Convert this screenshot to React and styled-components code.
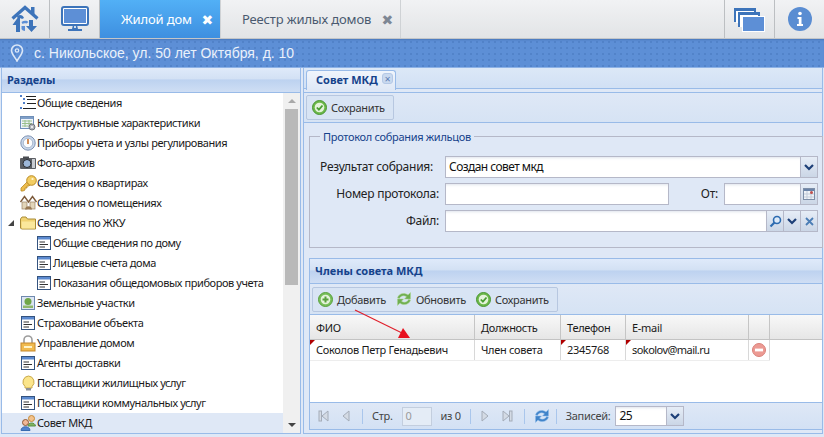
import React from 'react';
import styled, { createGlobalStyle } from 'styled-components';

const GlobalStyle = createGlobalStyle`
  html, body { margin: 0; padding: 0; background: #dfe8f6; }
  * { box-sizing: border-box; }
`;

const FONT = `"Noto Sans", "DejaVu Sans", sans-serif`;

const HomeLogo = () => (
  <svg width='28' height='28' viewBox='0 0 28 28'>
    <path d='M1.500 13.500 L14 2.500 L26.500 13.500' fill='none' stroke='#3d74ba' strokeWidth='3.200' />
    <rect x='20' y='2' width='3.500' height='8' fill='#3d74ba' />
    <path d='M6 11 C9 9 12 10 13 13 L11 14 C10 13 9.500 13 9 13.500 V27 H5 V20 H1.500 L6.500 13 Z' fill='#3d74ba' />
    <path d='M22 15 V21 H26 L20.500 27 L15 21 H18 V15 Z' fill='#3d74ba' />
    <path d='M10.500 17 C13 15 16 15.500 17.500 17 L15.500 18.500 C14 18 12.500 18 11.500 19 Z' fill='#5d8fd6' />
    <path d='M10.500 21 H14 V26 C12.500 26 11 25 10.500 24 Z' fill='#5d8fd6' />
  </svg>
);

const MonitorIcon = () => (
  <svg width='28' height='26' viewBox='0 0 28 26'>
    <rect x='1' y='1' width='26' height='18' rx='2' fill='#fff' stroke='#3d74ba' strokeWidth='2' />
    <rect x='3' y='3' width='22' height='14' fill='#5d8fd6' />
    <path d='M12 19 H16 L17 23 H21 V25 H7 V23 H11 Z' fill='#3d74ba' />
    <circle cx='14' cy='21' r='1' fill='#fff' />
  </svg>
);

const PinIcon = () => (
  <svg width='14' height='18' viewBox='0 0 14 18'>
    <path d='M7 17 C4 12 1.500 9.500 1.500 6.500 A5.500 5.500 0 0 1 12.500 6.500 C12.500 9.500 10 12 7 17 Z' fill='none' stroke='#dbe7f7' strokeWidth='1.600' />
    <circle cx='7' cy='6.500' r='1.700' fill='none' stroke='#dbe7f7' strokeWidth='1.300' />
  </svg>
);

const WindowsIcon = () => (
  <svg width='31' height='25' viewBox='0 0 31 25'>
    <rect x='0' y='1' width='22' height='14' fill='#3d74ba' />
    <rect x='2' y='4' width='18' height='12' fill='#fff' />
    <rect x='4' y='5' width='22' height='15' fill='#3d74ba' />
    <rect x='6' y='8' width='18' height='12' fill='#fff' />
    <rect x='8' y='9' width='23' height='16' fill='#fff' />
    <rect x='9' y='10' width='21' height='14' fill='#5d8fd6' />
  </svg>
);

const InfoIcon = () => (
  <svg width='24' height='24' viewBox='0 0 24 24'>
    <circle cx='12' cy='12' r='12' fill='#5a8dd2' />
    <circle cx='12' cy='6.500' r='1.800' fill='#fff' />
    <path d='M9.500 10 H13.500 V17 H15 V19 H9 V17 H10.800 V12 H9.500 Z' fill='#fff' />
  </svg>
);

const CheckIcon = () => (
  <svg width='15' height='15' viewBox='0 0 15 15'>
    <circle cx='7.500' cy='7.500' r='7' fill='#6cb84a' stroke='#4a9632' />
    <circle cx='7.500' cy='7.500' r='4.800' fill='#e4f3da' />
    <path d='M4.800 7.500 L6.900 9.700 L10.500 5.500' fill='none' stroke='#4a9e34' strokeWidth='1.800' />
  </svg>
);

const AddIcon = () => (
  <svg width='15' height='15' viewBox='0 0 15 15'>
    <circle cx='7.500' cy='7.500' r='7' fill='#78bf5a' stroke='#58a03c' />
    <circle cx='7.500' cy='7.500' r='4.800' fill='#e4f3da' />
    <path d='M7.500 4.500 V10.500 M4.500 7.500 H10.500' stroke='#58a03c' strokeWidth='2' />
  </svg>
);

const RefreshIcon = ({ color = '#6fae50', light = '#a8d48c' }) => (
  <svg width='16' height='16' viewBox='0 0 16 16'>
    <path d='M1.500 7 C2.500 2.500 8.500 1 12 4 L14.500 1.500 V8 H8.500 L10.500 5.800 C8 3.800 4.500 4.800 3.500 7.500 Z' fill={color} stroke={light} strokeWidth='0.500' />
    <path d='M14.500 9 C13.500 13.500 7.500 15 4 12 L1.500 14.500 V8 H7.500 L5.500 10.200 C8 12.200 11.500 11.200 12.500 8.500 Z' fill={color} stroke={light} strokeWidth='0.500' />
  </svg>
);

const RemoveIcon = () => (
  <svg width='14' height='14' viewBox='0 0 14 14'>
    <circle cx='7' cy='7' r='6.500' fill='#ec9a93' stroke='#d9807a' />
    <rect x='3' y='5.600' width='8' height='2.800' fill='#fff' />
  </svg>
);

const ChevronIcon = ({ color = '#1d3f77' }) => (
  <svg width='10' height='7' viewBox='0 0 10 7'>
    <path d='M1 1 L5 5 L9 1' fill='none' stroke={color} strokeWidth='2.200' />
  </svg>
);

const CalendarIcon = () => (
  <svg width='12' height='12' viewBox='0 0 12 12'>
    <rect x='0.500' y='0.500' width='11' height='11' fill='#f0f3f8' stroke='#7d8ea8' />
    <rect x='1' y='1' width='10' height='2' fill='#6a83a8' />
    <path d='M4 3 V11 M8 3 V11 M1 6 H11 M1 9 H11' stroke='#c2cbd9' />
    <circle cx='8.500' cy='4.500' r='1.500' fill='#c0504d' />
  </svg>
);

const SearchIcon = () => (
  <svg width='13' height='13' viewBox='0 0 13 13'>
    <circle cx='8' cy='5' r='3.500' fill='#dce9f8' stroke='#2c6bb0' strokeWidth='1.600' />
    <path d='M5.500 7.500 L1.500 11.500' stroke='#2c6bb0' strokeWidth='2.200' />
  </svg>
);

const CrossIcon = () => (
  <svg width='9' height='9' viewBox='0 0 9 9'>
    <path d='M1 1 L8 8 M8 1 L1 8' stroke='#4b7db5' strokeWidth='1.800' />
  </svg>
);

const PagerGlyph = ({ dir, bar }) => (
  <svg width='12' height='12' viewBox='0 0 12 12' style={{ transform: dir === 'left' ? 'scaleX(-1)' : 'none' }}>
    <path d='M2 1 L8 6 L2 11 Z' fill='#d4dbe5' stroke='#a4acb8' />
    {bar && <rect x='8.500' y='1' width='2.500' height='10' fill='#d4dbe5' stroke='#a4acb8' />}
  </svg>
);

const ListIcon = () => (
  <svg width='16' height='16' viewBox='0 0 16 16'>
    <g fill='#4f7fcb'>
      <rect x='0' y='0' width='2' height='2' /><rect x='3' y='3' width='2' height='2' />
      <rect x='3' y='7' width='2' height='2' /><rect x='0' y='12' width='2' height='2' />
    </g>
    <path d='M6 1.500 H16 M7 4.500 H16 M7 8.500 H16 M3 13.500 H16' stroke='#222' />
  </svg>
);

const TableGearIcon = () => (
  <svg width='16' height='16' viewBox='0 0 16 16'>
    <rect x='0.500' y='1.500' width='13' height='12' fill='#eef3fa' stroke='#6f8fb8' />
    <rect x='1' y='2' width='12' height='2' fill='#7f9fc8' />
    <path d='M2 6 H12 M2 8.500 H12 M2 11 H9 M5 5 V12 M9 5 V10' stroke='#9ac08a' />
    <circle cx='12' cy='12' r='3' fill='#b0b4ba' stroke='#70757c' />
    <circle cx='12' cy='12' r='1' fill='#fff' />
  </svg>
);

const GaugeIcon = () => (
  <svg width='16' height='16' viewBox='0 0 16 16'>
    <circle cx='8' cy='8' r='7.200' fill='#c9d8ec' stroke='#7f93b3' />
    <circle cx='8' cy='8' r='4.800' fill='#fbfcfe' stroke='#a6b6cc' />
    <path d='M8 4 V9' stroke='#c9702a' strokeWidth='1.600' />
  </svg>
);

const CameraIcon = () => (
  <svg width='16' height='14' viewBox='0 0 16 14'>
    <rect x='0' y='2' width='16' height='11' rx='1' fill='#5c5f64' />
    <rect x='3' y='0.500' width='6' height='3' fill='#4a4d52' />
    <rect x='12' y='3' width='3' height='9' fill='#c8ccd2' />
    <circle cx='7' cy='7.500' r='4' fill='#9db7d8' stroke='#2a2c30' />
  </svg>
);

const KeyIcon = () => (
  <svg width='17' height='17' viewBox='0 0 17 17'>
    <path d='M1 13 L8 6 L11 9 L9 11 L7 11 L7 13 L5 13 L5 15 L3 16 L1 16 Z' fill='#edbd4e' stroke='#b98a24' strokeWidth='0.800' />
    <circle cx='11.500' cy='5.500' r='4.800' fill='#f3cd62' stroke='#b98a24' />
    <circle cx='12.500' cy='4' r='1.100' fill='#fff6d8' />
  </svg>
);

const HousesIcon = () => (
  <svg width='17' height='16' viewBox='0 0 17 16'>
    <path d='M0.500 7 L4.500 1.500 L8.500 7 L12.500 1.500 L16.500 7' fill='none' stroke='#7c5a3a' strokeWidth='1.400' />
    <rect x='2' y='7' width='5' height='7' fill='#e2d5b9' stroke='#9a8468' strokeWidth='0.700' />
    <rect x='10' y='7' width='5' height='7' fill='#e2d5b9' stroke='#9a8468' strokeWidth='0.700' />
    <path d='M5 14.500 C5 10 12 10 12 14.500 Z' fill='#9a7a55' />
  </svg>
);

const FolderIcon = () => (
  <svg width='16' height='14' viewBox='0 0 16 14'>
    <path d='M0.500 3 L2 1 H6 L7.500 3 H15.500 V13 H1.500 L0.500 12 Z' fill='#f1d372' stroke='#a98c38' />
    <path d='M1.500 5.500 H15 V12.500 H2 Z' fill='#fbe89c' />
  </svg>
);

const FormIcon = () => (
  <svg width='14' height='14' viewBox='0 0 14 14'>
    <rect x='0.500' y='0.500' width='13' height='13' fill='#fff' stroke='#34537f' />
    <rect x='1' y='1' width='12' height='2.500' fill='#5c8ad0' />
    <path d='M2.500 6 H8 M2.500 8.500 H11 M2.500 11 H8' stroke='#333' />
  </svg>
);

const LandIcon = () => (
  <svg width='14' height='14' viewBox='0 0 14 14'>
    <rect x='0.500' y='0.500' width='13' height='13' fill='#dce5f2' stroke='#6f89ae' />
    <circle cx='7' cy='5.500' r='3.500' fill='#6fa648' />
    <rect x='2' y='9.500' width='10' height='2.500' fill='#8fb86c' />
  </svg>
);

const LockIcon = () => (
  <svg width='16' height='17' viewBox='0 0 16 17'>
    <path d='M4 8 V5 A4 4 0 0 1 12 5 V8' fill='none' stroke='#9d9d9d' strokeWidth='1.600' />
    <rect x='1' y='8' width='14' height='8' fill='#f1bb4f' stroke='#c6872a' />
    <path d='M4 12 H12' stroke='#fff4c8' strokeWidth='2' />
  </svg>
);

const BulbIcon = () => (
  <svg width='15' height='16' viewBox='0 0 15 16'>
    <path d='M7.500 1 A6 6 0 0 1 11 11.500 V13 H4 V11.500 A6 6 0 0 1 7.500 1 Z' fill='#fbe58b' stroke='#c9a94b' />
    <rect x='5' y='13' width='5' height='2.500' fill='#8f9297' />
  </svg>
);

const UsersIcon = () => (
  <svg width='17' height='16' viewBox='0 0 17 16'>
    <circle cx='11.500' cy='3.500' r='3' fill='#f2c28c' stroke='#c58a3a' />
    <path d='M8 11 C8 7 15 7 15.500 11 Z' fill='#7db45e' stroke='#5b8f45' />
    <circle cx='5.500' cy='7.500' r='3' fill='#f0b897' stroke='#8f5a34' />
    <path d='M1 15.500 C1 10.500 10 10.500 10 15.500 Z' fill='#4f83cf' stroke='#386aaf' />
  </svg>
);

const TREE = [
  { label: 'Общие сведения', icon: <ListIcon /> },
  { label: 'Конструктивные характеристики', icon: <TableGearIcon /> },
  { label: 'Приборы учета и узлы регулирования', icon: <GaugeIcon /> },
  { label: 'Фото-архив', icon: <CameraIcon /> },
  { label: 'Сведения о квартирах', icon: <KeyIcon /> },
  { label: 'Сведения о помещениях', icon: <HousesIcon /> },
  { label: 'Сведения по ЖКУ', icon: <FolderIcon />, open: true },
  { label: 'Общие сведения по дому', icon: <FormIcon />, nested: true },
  { label: 'Лицевые счета дома', icon: <FormIcon />, nested: true },
  { label: 'Показания общедомовых приборов учета', icon: <FormIcon />, nested: true },
  { label: 'Земельные участки', icon: <LandIcon /> },
  { label: 'Страхование объекта', icon: <FormIcon /> },
  { label: 'Управление домом', icon: <LockIcon /> },
  { label: 'Агенты доставки', icon: <FormIcon /> },
  { label: 'Поставщики жилищных услуг', icon: <BulbIcon /> },
  { label: 'Поставщики коммунальных услуг', icon: <FormIcon /> },
  { label: 'Совет МКД', icon: <UsersIcon />, selected: true },
];

export default function App() {
  return (
    <Page>
      <GlobalStyle />
      <TopBar>
        <IconTab><HomeLogo /></IconTab>
        <IconTab><MonitorIcon /></IconTab>
        <MainTab $active>Жилой дом <TabClose $active>✖</TabClose></MainTab>
        <MainTab>Реестр жилых домов <TabClose>✖</TabClose></MainTab>
        <TopSpacer />
        <IconTab $left><WindowsIcon /></IconTab>
        <IconTab $left><InfoIcon /></IconTab>
      </TopBar>
      <AddressBar>
        <PinIcon />
        <span>с. Никольское, ул. 50 лет Октября, д. 10</span>
      </AddressBar>
      <Body>
        <Sidebar>
          <PanelHeader>Разделы</PanelHeader>
          <TreeWrap>
            <Tree>
              {TREE.map((row) => (
                <TreeRow key={row.label} $selected={row.selected} $nested={row.nested}>
                  <Expander>{row.open && <ExpanderArrow />}</Expander>
                  <TreeIcon>{row.icon}</TreeIcon>
                  <TreeLabel>{row.label}</TreeLabel>
                </TreeRow>
              ))}
            </Tree>
            <Scrollbar>
              <ScrollArrow />
              <ScrollThumb />
              <ScrollArrow $down />
            </Scrollbar>
          </TreeWrap>
        </Sidebar>
        <Content>
          <TabStrip>
            <DocTab>
              Совет МКД
              <DocTabClose>✕</DocTabClose>
            </DocTab>
          </TabStrip>
          <SaveBar>
            <ToolGroup>
              <ToolButton><CheckIcon />Сохранить</ToolButton>
            </ToolGroup>
          </SaveBar>
          <FormArea>
            <Fieldset>
              <legend>Протокол собрания жильцов</legend>
              <FieldRow>
                <FieldLabel $wide>Результат собрания:</FieldLabel>
                <Field $grow>
                  <Input>Создан совет мкд</Input>
                  <Trigger><ChevronIcon /></Trigger>
                </Field>
              </FieldRow>
              <FieldRow>
                <FieldLabel>Номер протокола:</FieldLabel>
                <Field $width={224}><Input /></Field>
                <ShortLabel>От:</ShortLabel>
                <Field $width={94}>
                  <Input />
                  <Trigger><CalendarIcon /></Trigger>
                </Field>
              </FieldRow>
              <FieldRow>
                <FieldLabel>Файл:</FieldLabel>
                <Field $grow>
                  <Input />
                  <Trigger><SearchIcon /></Trigger>
                  <Trigger><ChevronIcon /></Trigger>
                  <Trigger><CrossIcon /></Trigger>
                </Field>
              </FieldRow>
            </Fieldset>
          </FormArea>
          <GridPanel>
            <PanelHeader>Члены совета МКД</PanelHeader>
            <GridToolbar>
              <ToolGroup>
                <ToolButton><AddIcon />Добавить</ToolButton>
                <ToolButton><RefreshIcon />Обновить</ToolButton>
                <ToolButton><CheckIcon />Сохранить</ToolButton>
              </ToolGroup>
            </GridToolbar>
            <GridHead>
              <HeadCell $width={165}>ФИО</HeadCell>
              <HeadCell $width={86}>Должность</HeadCell>
              <HeadCell $width={65}>Телефон</HeadCell>
              <HeadCell $width={123}>E-mail</HeadCell>
              <HeadCell $width={21} />
              <HeadFill />
            </GridHead>
            <GridBody>
              <GridRow>
                <Cell $width={165} $dirty>Соколов Петр Генадьевич</Cell>
                <Cell $width={86}>Член совета</Cell>
                <Cell $width={65} $dirty>2345768</Cell>
                <Cell $width={123} $dirty $tight>sokolov@mail.ru</Cell>
                <Cell $width={21} $icon><RemoveIcon /></Cell>
              </GridRow>
            </GridBody>
            <Pager>
              <PagerGlyph dir='left' bar />
              <PagerGlyph dir='left' />
              <PagerSep $left={2} />
              <PagerText>Стр.</PagerText>
              <PageInput>0</PageInput>
              <PagerText>из 0</PagerText>
              <PagerSep />
              <PagerGlyph />
              <PagerGlyph bar />
              <PagerSep $left={2} />
              <RefreshIcon color='#3f83c9' light='#8dbbe8' />
              <PagerSep $left={-3} />
              <PagerText $right={-4}>Записей:</PagerText>
              <Field $width={69} $short>
                <Input $short>25</Input>
                <Trigger><ChevronIcon /></Trigger>
              </Field>
            </Pager>
            <ArrowOverlay width='60' height='32' viewBox='0 0 60 32'>
              <path d='M1 1 L48 24' stroke='#e0202c' strokeWidth='1.200' />
              <path d='M56 29 L44 29 L49 19 Z' fill='#e8101e' />
            </ArrowOverlay>
          </GridPanel>
        </Content>
      </Body>
    </Page>
  );
}

const Page = styled.div`
  width: 824px;
  height: 437px;
  display: flex;
  flex-direction: column;
  overflow: hidden;
  font: 11px ${FONT};
  letter-spacing: -0.3px;
  color: #1a1a1a;
  background: #dfe8f6;
`;

const TopBar = styled.div`
  height: 39px;
  flex: none;
  display: flex;
  background: linear-gradient(#f1f2f4, #e2e4e6);
  border-bottom: 1px solid #c3c6c9;
`;

const IconTab = styled.div`
  width: 50px;
  display: flex;
  align-items: center;
  justify-content: center;
  border-${(p) => (p.$left ? 'left' : 'right')}: 1px solid #bcbfc2;
`;

const MainTab = styled.div`
  display: flex;
  align-items: center;
  justify-content: space-between;
  padding: 0 7px 0 21px;
  width: ${(p) => (p.$active ? 121 : 180)}px;
  font-size: 13px;
  letter-spacing: -0.15px;
  color: ${(p) => (p.$active ? '#fff' : '#4a5a70')};
  background: ${(p) => (p.$active ? 'linear-gradient(#52b0f6, #3e8fe0)' : 'none')};
  border-right: 1px solid #cfd2d5;
`;

const TabClose = styled.span`
  font-size: 14px;
  color: ${(p) => (p.$active ? '#fff' : '#7d8794')};
`;

const TopSpacer = styled.div`
  flex: 1;
`;

const AddressBar = styled.div`
  height: 29px;
  flex: none;
  display: flex;
  align-items: center;
  gap: 10px;
  padding-left: 10px;
  color: #eaf1fb;
  font: 14px "Liberation Sans", sans-serif;
  letter-spacing: 0;
  background-color: #5d8fd6;
  background-image: radial-gradient(#5283c9 1px, transparent 1.200px);
  background-size: 6px 6px;
  border-bottom: 1px solid #8db2e6;
  box-shadow: inset 0 2px 2px -1px #4a78ba;
`;

const Body = styled.div`
  flex: 1;
  min-height: 0;
  display: flex;
  gap: 2px;
  padding: 0 1px 3px 1px;
`;

const Sidebar = styled.div`
  width: 300px;
  display: flex;
  flex-direction: column;
  border: 1px solid #99bbe8;
  border-top: none;
`;

const PanelHeader = styled.div`
  height: 25px;
  flex: none;
  display: flex;
  align-items: center;
  padding: 0 0 2px 5px;
  font-weight: 700;
  letter-spacing: 0;
  color: #15428b;
  border-bottom: 1px solid #99bbe8;
  background: linear-gradient(#dfeafa 0, #d3e1f4 45%, #bdd2f0 50%, #cfdef4 100%);
`;

const TreeWrap = styled.div`
  flex: 1;
  min-height: 0;
  display: flex;
  background: #fff;
`;

const Tree = styled.div`
  flex: 1;
  min-width: 0;
`;

const TreeRow = styled.div`
  height: 20px;
  display: flex;
  align-items: center;
  padding-left: ${(p) => (p.$nested ? 17 : 1)}px;
  white-space: nowrap;
  background: ${(p) => (p.$selected ? '#dfe8f6' : 'transparent')};
`;

const TreeLabel = styled.span`
  padding-bottom: 2px;
  letter-spacing: -0.42px;
`;

const Expander = styled.span`
  width: 16px;
  display: flex;
  justify-content: center;
`;

const ExpanderArrow = styled.span`
  width: 0;
  height: 0;
  border-left: 6px solid transparent;
  border-bottom: 6px solid #444;
`;

const TreeIcon = styled.span`
  width: 18px;
  flex: none;
  display: flex;
  align-items: center;
  justify-content: center;
`;

const Scrollbar = styled.div`
  width: 17px;
  flex: none;
  display: flex;
  flex-direction: column;
  align-items: center;
  background: #f0f0f0;
`;

const ScrollArrow = styled.span`
  flex: none;
  margin: 6px 0;
  width: 0;
  height: 0;
  border-left: 4px solid transparent;
  border-right: 4px solid transparent;
  ${(p) => (p.$down ? 'border-top: 4px solid #444;' : 'border-bottom: 4px solid #a9a9a9;')}
`;

const ScrollThumb = styled.span`
  width: 13px;
  height: 176px;
  margin-bottom: auto;
  background: #b9b9b9;
`;

const Content = styled.div`
  flex: 1;
  min-width: 0;
  display: flex;
  flex-direction: column;
  border: 1px solid #99bbe8;
  border-top: none;
`;

const TabStrip = styled.div`
  height: 25px;
  flex: none;
  display: flex;
  align-items: flex-end;
  padding: 0 0 3px 2px;
  border-bottom: 1px solid #99bbe8;
  background: linear-gradient(to bottom, #dce8f7, #cfdff4);
  box-shadow: inset 0 -3px 0 #dfe8f6, inset 0 -4px 0 #99bbe8;
`;

const DocTab = styled.div`
  position: relative;
  width: 90px;
  height: 20px;
  display: flex;
  align-items: center;
  padding: 0 0 2px 9px;
  font-weight: 700;
  letter-spacing: 0;
  color: #15428b;
  border: 1px solid #99bbe8;
  border-bottom: none;
  border-radius: 3px 3px 0 0;
  background: linear-gradient(#f0f5fc, #dfe8f6);
  margin-bottom: -1px;
`;

const DocTabClose = styled.span`
  position: absolute;
  top: 2px;
  right: 2px;
  width: 11px;
  height: 11px;
  display: flex;
  align-items: center;
  justify-content: center;
  font-size: 8px;
  color: #5f7fb4;
  background: #c9d9ef;
  border: 1px solid #b4c8e6;
  border-radius: 3px;
`;

const SaveBar = styled.div`
  height: 30px;
  flex: none;
  display: flex;
  align-items: center;
  padding-left: 2px;
  border-bottom: 1px solid #99bbe8;
  background: linear-gradient(#dfe8f6, #d6e3f4);
`;

const ToolGroup = styled.div`
  height: 25px;
  display: flex;
  align-items: center;
  gap: 10px;
  padding: 0 8px 0 5px;
  border: 1px solid #b7c7e0;
  border-radius: 2px;
  background: #d8e4f4;
`;

const ToolButton = styled.div`
  display: flex;
  align-items: center;
  gap: 4px;
  color: #333;
`;

const FormArea = styled.div`
  height: 135px;
  flex: none;
  padding: 6px 0 0 5px;
`;

const Fieldset = styled.fieldset`
  height: 119px;
  margin: 0 -1px 0 0;
  padding: 12px 4px 0 9px;
  display: flex;
  flex-direction: column;
  gap: 5px;
  border: 1px solid #b5b8c8;

  legend {
    padding: 0 3px;
    margin-left: 1px;
    color: #15428b;
  }
`;

const FieldRow = styled.div`
  display: flex;
  align-items: center;
`;

const FieldLabel = styled.label`
  width: 126px;
  padding: 0 ${(p) => (p.$wide ? 12 : 6)}px 2px 0;
  flex: none;
  text-align: right;
  font-size: 12px;
  letter-spacing: -0.25px;
  color: #222;
  white-space: nowrap;
`;

const ShortLabel = styled(FieldLabel)`
  width: 49px;
  padding-right: 0;
  margin-right: 6px;
`;

const Field = styled.div`
  display: flex;
  height: ${(p) => (p.$short ? 20 : 22)}px;
  ${(p) => (p.$grow ? 'flex: 1;' : `width: ${p.$width}px;`)}
`;

const Input = styled.div`
  flex: 1;
  min-width: 0;
  display: flex;
  align-items: center;
  padding: 0 0 2px 3px;
  font-size: 12px;
  letter-spacing: -0.55px;
  color: #111;
  background: #fff;
  border: 1px solid #b5b8c8;
  box-shadow: inset 0 3px 3px -2px #dfe4ec;
`;

const Trigger = styled.div`
  width: 17px;
  flex: none;
  display: flex;
  align-items: center;
  justify-content: center;
  background: linear-gradient(#e6edf7, #cbd6e6);
  border: 1px solid #b5b8c8;
  border-left: none;
`;

const GridPanel = styled.div`
  position: relative;
  margin-left: 5px;
  flex: none;
  display: flex;
  flex-direction: column;
  border: 1px solid #99bbe8;
  border-right: none;
`;

const GridToolbar = styled.div`
  height: 31px;
  flex: none;
  display: flex;
  align-items: center;
  padding-left: 2px;
  border-bottom: 1px solid #99bbe8;
  background: linear-gradient(#dfe8f6, #d6e3f4);
`;

const GridHead = styled.div`
  height: 25px;
  flex: none;
  display: flex;
  border-bottom: 1px solid #c3c3c3;
  background: linear-gradient(#f8f8f8, #e6e6e6);
`;

const HeadCell = styled.div`
  width: ${(p) => p.$width}px;
  flex: none;
  display: flex;
  align-items: center;
  padding-left: 6px;
  border-right: 1px solid #c5c5c5;
`;

const HeadFill = styled.div`
  flex: 1;
`;

const GridBody = styled.div`
  height: 62px;
  flex: none;
  background: #fff;
`;

const GridRow = styled.div`
  height: 21px;
  width: max-content;
  display: flex;
  border-bottom: 1px solid #ededed;
`;

const Cell = styled.div`
  position: relative;
  width: ${(p) => p.$width}px;
  flex: none;
  display: flex;
  align-items: center;
  padding: ${(p) => (p.$icon ? '0 0 0 3px' : '0 0 2px 6px')};
  ${(p) => p.$tight && 'letter-spacing: -0.55px;'}
  border-right: 1px solid #d8d8d8;

  ${(p) => p.$dirty && `
    &::before {
      content: '';
      position: absolute;
      left: 0;
      top: 0;
      border-top: 5px solid #b00000;
      border-right: 5px solid transparent;
    }
  `}
`;

const Pager = styled.div`
  height: 27px;
  flex: none;
  display: flex;
  align-items: center;
  gap: 9px;
  padding-left: 8px;
  border-top: 1px solid #99bbe8;
  background: linear-gradient(#dfe8f6, #d3e1f4);
`;

const PagerSep = styled.span`
  width: 1px;
  height: 15px;
  margin-left: ${(p) => p.$left || 0}px;
  background: #a9c6ec;
`;

const PagerText = styled.span`
  padding-bottom: 2px;
  margin-right: ${(p) => p.$right || 0}px;
  color: #444;
`;

const PageInput = styled.span`
  width: 30px;
  height: 19px;
  display: flex;
  align-items: center;
  padding: 0 0 2px 3px;
  color: #9a9a9a;
  background: #e4ecf6;
  border: 1px solid #c3cede;
`;

const ArrowOverlay = styled.svg`
  position: absolute;
  left: 44px;
  top: 50px;
`;
